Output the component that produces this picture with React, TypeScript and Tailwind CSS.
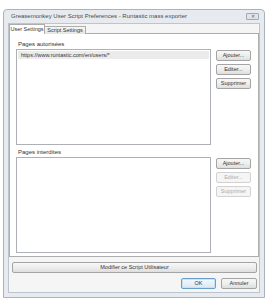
import React from "react";

const font = { fontFamily: '"Liberation Sans", Arial, sans-serif' };

function Btn({ label, disabled, def, className = "" }: { label: string; disabled?: boolean; def?: boolean; className?: string }) {
  let look = "border-[#a4a4a4] text-[#333] bg-gradient-to-b from-[#f7f7f7] via-[#eeeeee] to-[#dedede]";
  if (disabled) look = "border-[#d2d2d2] text-[#ababab] bg-[#f5f5f5]";
  if (def) look = "border-[#6a9ecb] text-[#333] bg-gradient-to-b from-[#f3f9fd] via-[#e8f1f9] to-[#d8e7f3] shadow-[inset_0_0_0_1px_#c6e4f6]";
  return (
    <div className={`h-[11px] rounded-[2px] border flex items-center justify-center text-[5.5px] leading-none ${look} ${className}`}>
      {label}
    </div>
  );
}

function PageList({ title, items, buttons }: { title: string; items: string[]; buttons: { label: string; disabled?: boolean }[] }) {
  return (
    <div className="flex flex-col">
      <div className="h-[10px] pl-[2px] flex items-center text-[6px] text-[#333]">{title}</div>
      <div className="flex gap-[5px]">
        <div className="w-[195px] h-[96px] border border-[#adb0b6] bg-white p-[1px]">
          {items.map((it) => (
            <div key={it} className="h-[8px] bg-[#ebebeb] pl-[3px] flex items-center text-[5.5px] text-[#333]">
              {it}
            </div>
          ))}
        </div>
        <div className="w-[35px] flex flex-col gap-[3px] pt-[1px]">
          {buttons.map((b) => (
            <Btn key={b.label} label={b.label} disabled={b.disabled} />
          ))}
        </div>
      </div>
    </div>
  );
}

export default function App() {
  return (
    <div className="w-[268px] h-[300px] bg-white pt-[9px] px-[3px]" style={font}>
      <div className="w-[262px] h-[289px] rounded-t-[4px] border border-[#a8b3bf] bg-[#e7ebf0] flex flex-col px-[4px] pb-[4px]">
        <div className="h-[13px] flex items-center justify-between pl-[3px] pr-[1px]">
          <span className="text-[6px] text-[#4a4a4a]">Greasemonkey User Script Preferences - Runtastic mass exporter</span>
          <div className="w-[13px] h-[7px] border border-[#a0aab5] rounded-[1px] bg-[#dfe4ea] flex items-center justify-center text-[5px] text-[#666] leading-none">
            ✕
          </div>
        </div>
        <div className="flex-1 border border-[#bcc5cf] bg-[#f5f5f5] flex flex-col">
          <div className="flex items-end h-[10px] text-[5.5px] text-[#333] relative z-10">
            <div className="w-[36px] h-[10px] border border-b-0 border-[#adadad] bg-white flex items-center justify-center">User Settings</div>
            <div className="w-[41px] h-[8px] border border-l-0 border-b-0 border-[#adadad] bg-gradient-to-b from-[#f7f7f7] to-[#e5e5e5] flex items-center justify-center">Script Settings</div>
          </div>
          <div className="w-[250px] h-[224px] -mt-[1px] border border-[#adadad] bg-white flex flex-col pl-[6px] pt-[5px]">
            <PageList
              title="Pages autorisées"
              items={["https://www.runtastic.com/en/users/*"]}
              buttons={[{ label: "Ajouter..." }, { label: "Editer..." }, { label: "Supprimer" }]}
            />
            <div className="h-[2px]" />
            <PageList
              title="Pages interdites"
              items={[]}
              buttons={[{ label: "Ajouter..." }, { label: "Editer...", disabled: true }, { label: "Supprimer", disabled: true }]}
            />
          </div>
          <div className="pl-[3px] pr-[2px] mt-[5px]">
            <Btn label="Modifier ce Script Utilisateur" />
          </div>
          <div className="flex justify-end gap-[5px] pr-[2px] mt-[5px]">
            <Btn label="OK" def className="w-[35px]" />
            <Btn label="Annuler" className="w-[36px]" />
          </div>
        </div>
      </div>
    </div>
  );
}
